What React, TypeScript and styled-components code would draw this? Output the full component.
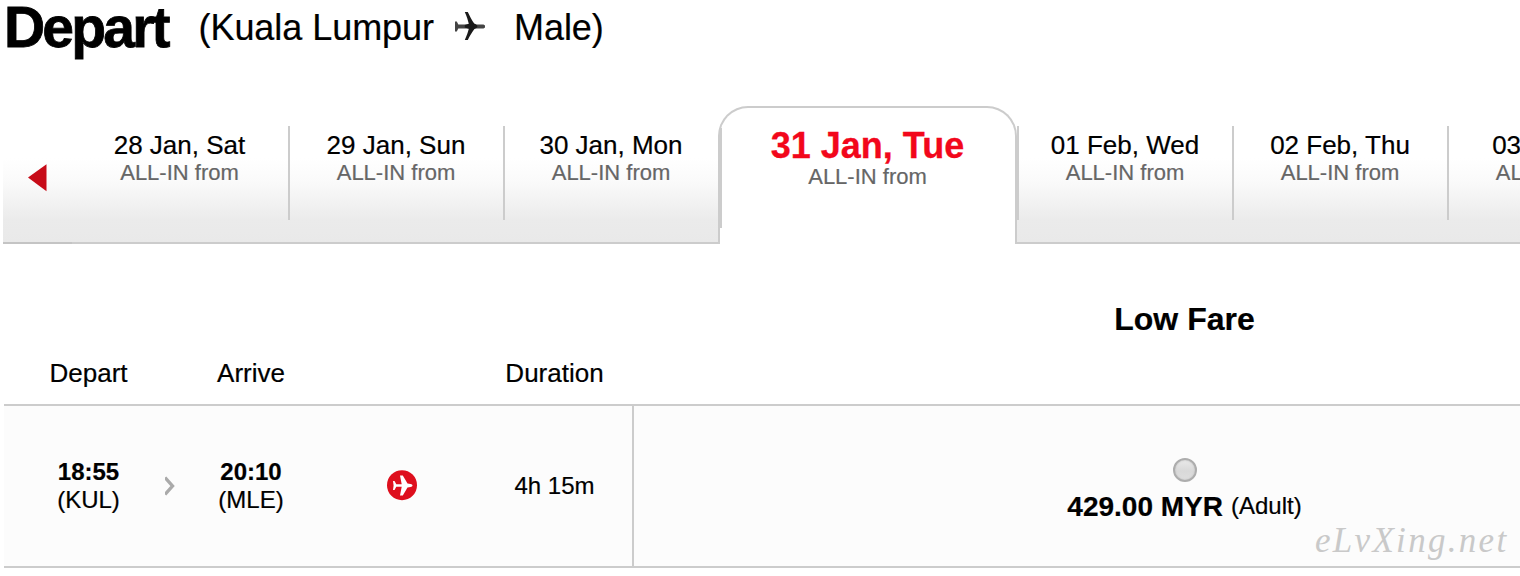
import React from "react";
import styled, { createGlobalStyle } from "styled-components";

const GlobalStyle = createGlobalStyle`
  body {
    margin: 0;
    background: #fff;
    color: #000;
    font-family: "Liberation Sans", Arial, Helvetica, sans-serif;
    overflow: hidden;
  }
`;

const Page = styled.main`
  position: relative;
  width: 100%;
  height: 576px;
  overflow: hidden;
`;

const RouteHeader = styled.header`
  display: flex;
  align-items: flex-start;
  height: 106px;
  padding-left: 4px;
  box-sizing: border-box;
  white-space: nowrap;
`;

const Title = styled.h1`
  width: 194.5px;
  margin: 0;
  font-size: 57px;
  line-height: 54px;
  letter-spacing: -2.8px;
  -webkit-text-stroke: 0.8px #000;
`;

const Place = styled.span`
  font-size: 36px;
  line-height: 40px;
  margin-top: 8px;
  letter-spacing: -0.05px;
  -webkit-text-stroke: 0.2px #000;
`;

const RoutePlane = styled.svg`
  width: 30px;
  height: 28px;
  margin: 12px 29px 0 21px;
  flex: none;
`;

const DateStrip = styled.nav`
  display: flex;
  align-items: flex-end;
  height: 138px;
  margin-left: 3px;
  white-space: nowrap;
`;

const stripFill = `
  box-sizing: border-box;
  flex: none;
  height: 118px;
  border-bottom: 2px solid #ccc;
  background: linear-gradient(#fff 0, #fff 32px, #fafafa 56px, #ebebeb 94px, #e9e9e9 100%);
`;

const PreviousButton = styled.div`
  ${stripFill}
  width: 69px;
  border-bottom-color: #c4c4c4;
  padding: 38px 0 0 24px;
  svg {
    display: block;
  }
`;

const DateCell = styled.div<{ $width: number }>`
  ${stripFill}
  width: ${(p) => p.$width}px;
`;

const DateBody = styled.div<{ $left?: boolean; $right?: boolean }>`
  box-sizing: border-box;
  height: 94px;
  padding: 4px 1px 0 0;
  text-align: center;
  border-left: ${(p) => (p.$left ? "2px solid #ccc" : "0")};
  border-right: ${(p) => (p.$right ? "2px solid #ccc" : "0")};
`;

const DateLabel = styled.div`
  font-size: 26px;
  line-height: 30px;
  -webkit-text-stroke: 0.2px #000;
`;

const FareLabel = styled.div`
  color: #666;
  font-size: 22px;
  line-height: 25px;
  -webkit-text-stroke: 0.2px #666;
`;

const ActiveTab = styled.div`
  position: relative;
  box-sizing: border-box;
  flex: none;
  width: 299px;
  height: 138px;
  padding-top: 19px;
  border: 2px solid #ccc;
  border-bottom: 0;
  border-radius: 30px 30px 0 0;
  text-align: center;
  background: #fff;
  &::before {
    content: "";
    position: absolute;
    left: 0;
    top: 20px;
    width: 2px;
    height: 100px;
    background: #ccc;
  }
`;

const ActiveDate = styled.div`
  color: #f2071b;
  font-size: 36px;
  font-weight: bold;
  line-height: 37px;
  -webkit-text-stroke: 0.3px #f2071b;
`;

const FlightTable = styled.section`
  margin-left: 4px;
`;

const HeaderRow = styled.div`
  display: flex;
  height: 160px;
  box-sizing: content-box;
  border-bottom: 2px solid #ccc;
`;

const FlightRow = styled.div`
  display: flex;
  height: 160px;
  border-bottom: 2px solid #ccc;
  background: #fcfcfc;
`;

const ScheduleColumns = styled.div<{ $heading?: boolean }>`
  display: grid;
  flex: none;
  box-sizing: border-box;
  width: 630px;
  padding-left: 44px;
  padding-bottom: ${(p) => (p.$heading ? "17px" : "0")};
  grid-template-columns: 81px 82px 80px 221px 85px;
  justify-items: center;
  align-items: ${(p) => (p.$heading ? "end" : "center")};
  border-right: 2px solid ${(p) => (p.$heading ? "transparent" : "#ccc")};
  font-size: ${(p) => (p.$heading ? 26 : 24)}px;
  line-height: 28px;
  text-align: center;
  white-space: nowrap;
  -webkit-text-stroke: 0.2px #000;
`;

const Time = styled.strong`
  display: block;
`;

const FareColumn = styled.div`
  display: flex;
  flex: none;
  flex-direction: column;
  align-items: center;
  width: 1101px;
  gap: 8px;
  padding-top: 52px;
  box-sizing: border-box;
`;

const FareHeading = styled.h2`
  margin: 5px 0 0;
  font-size: 32px;
  line-height: 36px;
  -webkit-text-stroke: 0.2px #000;
`;

const Radio = styled.span`
  box-sizing: border-box;
  width: 24px;
  height: 24px;
  border: 2px solid #adadad;
  border-radius: 50%;
  background: linear-gradient(#e9e9e9, #d9d9d9 55%, #dedede);
  box-shadow: inset 0 0 2px #bbb;
`;

const Price = styled.div`
  display: flex;
  gap: 8px;
  font-size: 28px;
  line-height: 33px;
  white-space: nowrap;
  -webkit-text-stroke: 0.2px #000;
`;

const Passenger = styled.span`
  font-size: 24px;
  line-height: 31px;
`;

const Watermark = styled.span`
  position: absolute;
  left: 1315px;
  top: 521px;
  color: #c9c9c9;
  font-family: "Liberation Serif", "Times New Roman", serif;
  font-size: 35px;
  font-style: italic;
  line-height: 40px;
  letter-spacing: 2.3px;
`;

const days = [
  { date: "28 Jan, Sat", width: 218, right: true },
  { date: "29 Jan, Sun", width: 215, right: true },
  { date: "30 Jan, Mon", width: 213 },
  { date: "31 Jan, Tue", width: 299, active: true },
  { date: "01 Feb, Wed", width: 217, left: true, right: true },
  { date: "02 Feb, Thu", width: 215, right: true },
  { date: "03 Feb, Fri", width: 213 },
];

export default function App() {
  return (
    <>
      <GlobalStyle />
      <Page>
        <RouteHeader>
          <Title>Depart</Title>
          <Place>(Kuala Lumpur</Place>
          <RoutePlane viewBox="0 0 30 28" aria-hidden="true">
            <path d="M0 9.500h1.800l1.500 3h25.200l1.500 1.100v1.800l-1.500 1H3.300l-1.500 3H0z" fill="#444" />
            <path
              d="M9.800 0h3c1.600 3.400 4.200 8.600 6.400 11.400 1.600.6 3.200 1.700 3.200 2.900s-1.600 2.300-3.200 2.900c-2.200 2.800-4.800 7.400-6.400 10.800h-3c2-4.400 3.200-7.800 4-11.200l-4-1.300v-2.400l4-1.300C13 8.500 11.800 4.400 9.800 0z"
              fill="#1a1a1a"
            />
          </RoutePlane>
          <Place>Male)</Place>
        </RouteHeader>

        <DateStrip>
          <PreviousButton>
            <svg width="20" height="28" viewBox="0 0 20 28" aria-hidden="true">
              <path d="M1 13.500 19.500 .3v27z" fill="#c70b18" />
            </svg>
          </PreviousButton>
          {days.map((d) =>
            d.active ? (
              <ActiveTab key={d.date}>
                <ActiveDate>{d.date}</ActiveDate>
                <FareLabel>ALL-IN from</FareLabel>
              </ActiveTab>
            ) : (
              <DateCell key={d.date} $width={d.width}>
                <DateBody $left={d.left} $right={d.right}>
                  <DateLabel>{d.date}</DateLabel>
                  <FareLabel>ALL-IN from</FareLabel>
                </DateBody>
              </DateCell>
            )
          )}
        </DateStrip>

        <FlightTable>
          <HeaderRow>
            <ScheduleColumns $heading>
              <span>Depart</span>
              <span />
              <span>Arrive</span>
              <span />
              <span>Duration</span>
            </ScheduleColumns>
            <FareColumn>
              <FareHeading>Low Fare</FareHeading>
            </FareColumn>
          </HeaderRow>
          <FlightRow>
            <ScheduleColumns>
              <div>
                <Time>18:55</Time>(KUL)
              </div>
              <svg width="10" height="20" viewBox="0 0 10 20" aria-hidden="true">
                <path d="M0 1.500 7.500 10 0 18.500" fill="none" stroke="#aaa" strokeWidth="3.4" />
              </svg>
              <div>
                <Time>20:10</Time>(MLE)
              </div>
              <svg width="30" height="32" viewBox="0 0 30 32" aria-hidden="true">
                <circle cx="15" cy="15.200" r="15" fill="#de0f1d" />
                <path
                  d="M6 11h1.500l1.800 3.200h5.400L13 5.500h2.800l4.700 8 3 .5c1.200.2 2 .8 2 1.500s-.8 1.300-2 1.500l-3 .5-4.700 8H13l1.700-8.700H9.300L7.500 20H6l.6-4.500z"
                  fill="#fff"
                />
              </svg>
              <span>4h 15m</span>
            </ScheduleColumns>
            <FareColumn>
              <Radio />
              <Price>
                <strong>429.00 MYR</strong>
                <Passenger>(Adult)</Passenger>
              </Price>
            </FareColumn>
          </FlightRow>
        </FlightTable>
        <Watermark>eLvXing.net</Watermark>
      </Page>
    </>
  );
}
